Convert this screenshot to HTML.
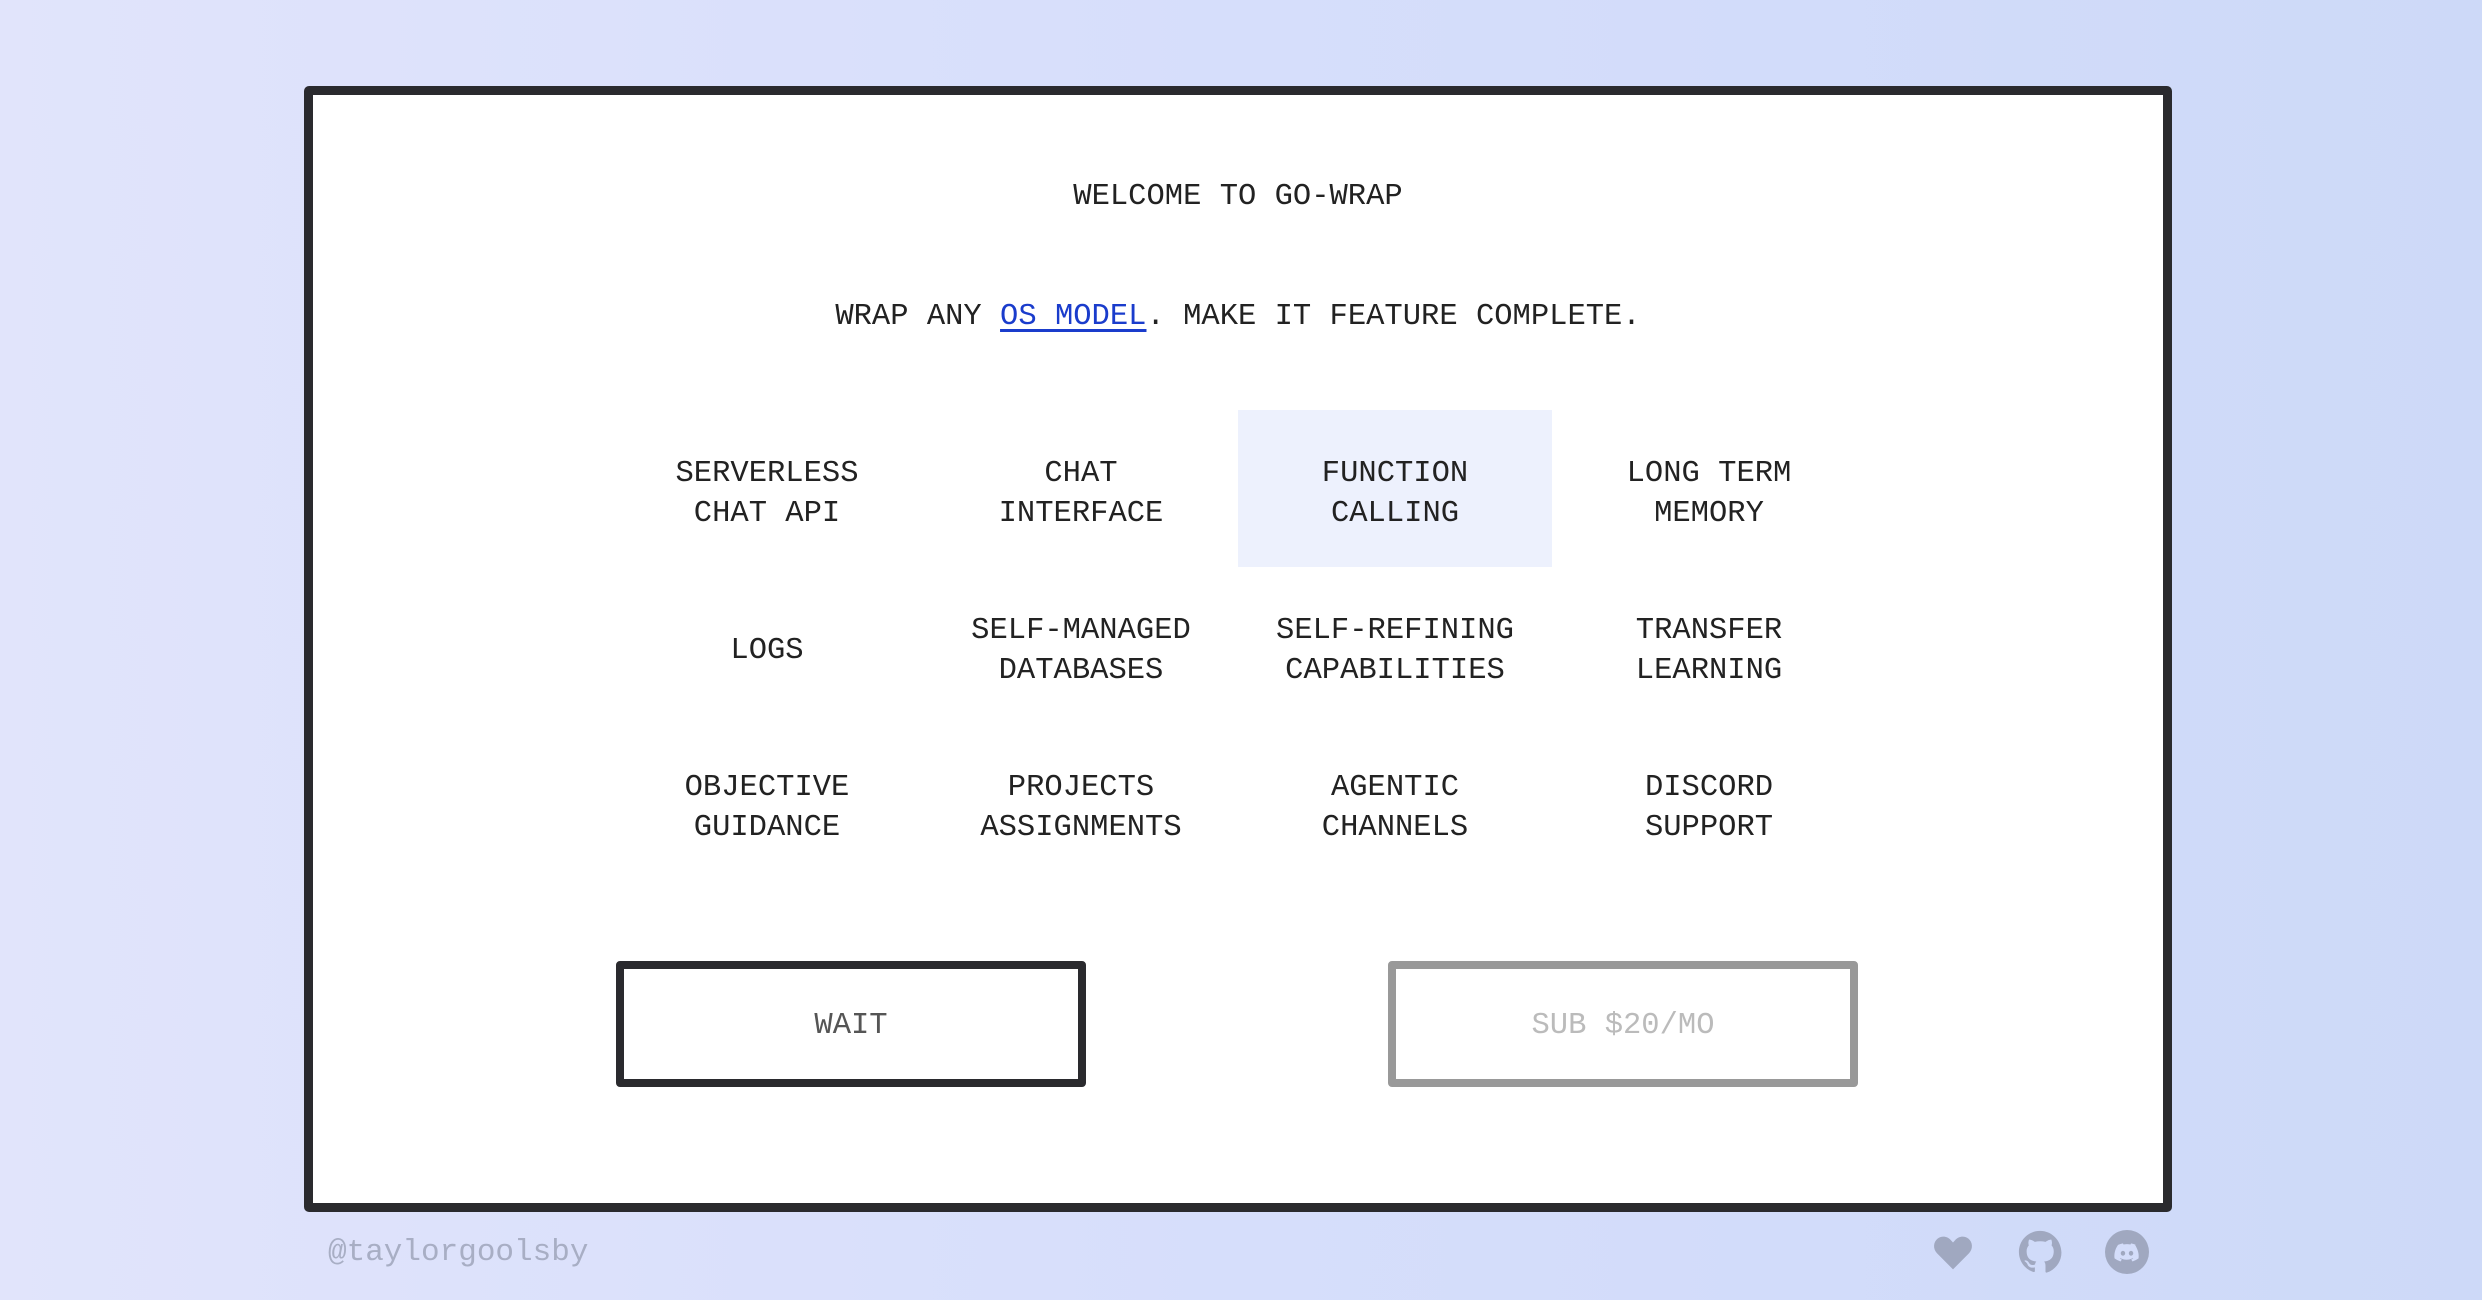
<!DOCTYPE html>
<html><head><meta charset="utf-8"><style>
html,body{margin:0;padding:0;}
body{width:2482px;height:1300px;overflow:hidden;background:linear-gradient(90deg,#e1e4fb 0%,#d6defb 50%,#cdd9f8 100%);font-family:"Liberation Mono",monospace;color:#222;position:relative;}
.card{position:absolute;left:304px;top:86px;width:1850px;height:1108px;border:9px solid #2a2a2e;border-radius:5px;background:#fff;}
.t{position:absolute;left:0;width:100%;text-align:center;font-size:30.5px;line-height:40px;}
a{color:#1a3ccc;text-decoration:underline;text-underline-offset:5px;}
.grid{position:absolute;left:297px;top:315px;width:1256px;display:grid;grid-template-columns:repeat(4,314px);grid-auto-rows:157px;}
.c{display:flex;align-items:center;justify-content:center;text-align:center;font-size:30.5px;line-height:40px;padding-top:10px;box-sizing:border-box;}
.hl{background:#edf1fd;}
.btn{position:absolute;top:866px;width:454px;height:110px;border:8px solid #2a2a2e;border-radius:4px;display:flex;align-items:center;justify-content:center;font-size:30.5px;color:#555;padding-top:4px;box-sizing:content-box;}
.b2{border-color:#999;color:#bbb;}
.foot{position:absolute;left:328px;top:1233px;font-size:31px;color:#a8aec4;line-height:40px;}
.ic{position:absolute;top:1230px;width:44px;height:44px;}
</style></head><body>
<div class="card">
<div class="t" style="top:82px">WELCOME TO GO-WRAP</div>
<div class="t" style="top:202px">WRAP ANY <a>OS MODEL</a>. MAKE IT FEATURE COMPLETE.</div>
<div class="grid">
<div class="c">SERVERLESS<br>CHAT API</div>
<div class="c">CHAT<br>INTERFACE</div>
<div class="c hl">FUNCTION<br>CALLING</div>
<div class="c">LONG TERM<br>MEMORY</div>
<div class="c">LOGS</div>
<div class="c">SELF-MANAGED<br>DATABASES</div>
<div class="c">SELF-REFINING<br>CAPABILITIES</div>
<div class="c">TRANSFER<br>LEARNING</div>
<div class="c">OBJECTIVE<br>GUIDANCE</div>
<div class="c">PROJECTS<br>ASSIGNMENTS</div>
<div class="c">AGENTIC<br>CHANNELS</div>
<div class="c">DISCORD<br>SUPPORT</div>
</div>
<div class="btn" style="left:303px;height:106px">WAIT</div>
<div class="btn b2" style="left:1075px;height:106px">SUB $20/MO</div>
</div>
<div class="foot">@taylorgoolsby</div>
<svg class="ic" style="left:1931px" viewBox="0 0 24 24"><path fill="#a0a8c0" d="M12 21.5 3.2 12.6C1 10.3 1.2 6.6 3.6 4.7c2.2-1.7 5.4-1.3 7.2.8L12 6.8l1.2-1.3c1.8-2.1 5-2.5 7.2-.8 2.4 1.9 2.6 5.6.4 7.9z"/></svg>
<svg class="ic" style="left:2018px" viewBox="0 0 24 24"><path fill="#a0a8c0" d="M12 .5C5.6.5.5 5.6.5 12c0 5.1 3.3 9.4 7.900 10.9.6.1.8-.2.8-.5v-2c-3.2.7-3.9-1.4-3.9-1.4-.5-1.3-1.3-1.7-1.3-1.7-1-.7.1-.7.1-.7 1.2.1 1.8 1.2 1.8 1.2 1 1.8 2.7 1.3 3.4 1 .1-.8.4-1.3.7-1.6-2.6-.3-5.3-1.3-5.3-5.7 0-1.3.5-2.3 1.2-3.1-.1-.3-.5-1.5.1-3.1 0 0 1-.3 3.2 1.2a11 11 0 0 1 5.8 0c2.2-1.5 3.2-1.2 3.2-1.2.6 1.6.2 2.8.1 3.1.7.8 1.2 1.8 1.2 3.1 0 4.4-2.7 5.4-5.3 5.7.4.4.8 1.1.8 2.2v3.3c0 .3.2.7.8.5 4.6-1.5 7.9-5.8 7.9-10.9C23.5 5.6 18.4.5 12 .5z"/></svg>
<svg class="ic" style="left:2105px" viewBox="0 0 24 24"><circle cx="12" cy="12" r="12" fill="#a0a8c0"/><path fill="#d4ddfa" d="M16.9 8.1a11 11 0 0 0-2.7-.8l-.3.6a10 10 0 0 0-3.8 0l-.3-.6a11 11 0 0 0-2.7.8c-1.7 2.5-2.2 5-1.9 7.4a11 11 0 0 0 3.3 1.7l.7-1.1a7 7 0 0 1-1.1-.5l.3-.2a7.8 7.8 0 0 0 6.7 0l.3.2a7 7 0 0 1-1.1.5l.7 1.1a11 11 0 0 0 3.3-1.7c.4-2.8-.6-5.2-1.9-7.4zM9.8 14c-.7 0-1.2-.6-1.2-1.3s.5-1.3 1.2-1.3 1.2.6 1.2 1.3-.5 1.3-1.2 1.3zm4.4 0c-.7 0-1.2-.6-1.2-1.3s.5-1.3 1.2-1.3 1.2.6 1.2 1.3-.5 1.3-1.2 1.3z"/></svg>
</body></html>
